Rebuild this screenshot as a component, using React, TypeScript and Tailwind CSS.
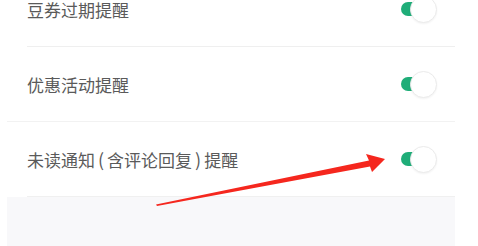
import React from "react";

function Toggle() {
  return (
    <div className="relative w-[36px] h-[27px] shrink-0">
      <div className="absolute left-0 top-[6.5px] h-[14px] w-[24px] rounded-full bg-[#1fad78]" />
      <div className="absolute right-0 top-0 w-[27px] h-[27px] rounded-full bg-white border border-[#ebebeb] shadow-[0_1px_2px_rgba(0,0,0,0.05)]" />
    </div>
  );
}

function Row({ children }: { children: React.ReactNode }) {
  return (
    <div className="h-[74px] flex items-center justify-between pl-[20px] pr-[18px]">
      <span className="text-[17px] leading-none text-[#5a5a5a] whitespace-nowrap">{children}</span>
      <Toggle />
    </div>
  );
}

export default function App() {
  return (
    <div
      className="relative w-[478px] h-[246px] overflow-hidden bg-white"
      style={{ fontFamily: '"Noto Sans CJK SC", "Noto Sans", sans-serif' }}
    >
      <div className="ml-[7px] w-[448px] -mt-[28px]">
        <Row>豆券过期提醒</Row>
        <div className="ml-[20px] h-px bg-[#efefef]" />
        <Row>优惠活动提醒</Row>
        <div className="h-px bg-[#f2f2f2]" />
        <Row>
          未读通知<span className="inline-block text-[18px] px-[3px]">(</span>含评论回复<span className="inline-block text-[18px] px-[3px]">)</span>提醒
        </Row>
        <div className="ml-[20px] h-px bg-[#f0f0f0]" />
        <div className="h-[60px] bg-[#f8f8fa]" />
      </div>
      <svg
        className="absolute left-0 top-0"
        width="478"
        height="246"
        viewBox="0 0 478 246"
      >
        <polygon
          points="156,204.5 369,160.5 366,154 385,159 372,172 370,166.5 157,206"
          fill="#f5271e"
        />
      </svg>
    </div>
  );
}
